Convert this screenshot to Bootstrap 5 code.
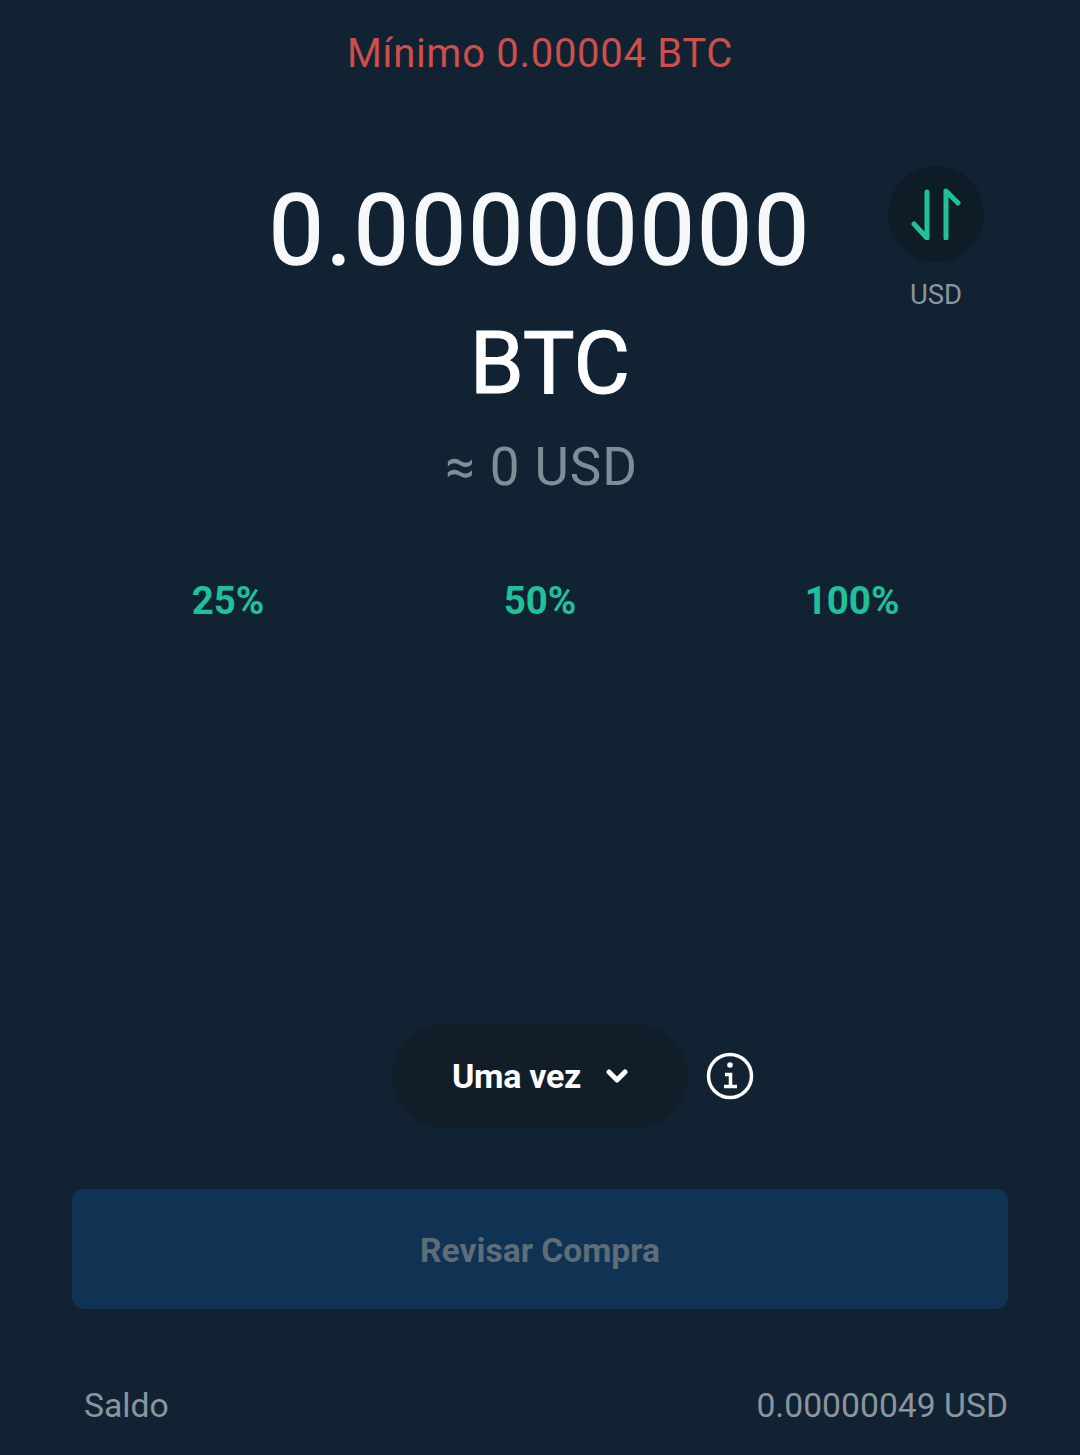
<!DOCTYPE html>
<html lang="pt">
<head>
  <meta charset="UTF-8" />
  <meta name="viewport" content="width=device-width, initial-scale=1" />
  <title>Comprar</title>
  <link href="https://cdn.jsdelivr.net/npm/bootstrap@5.3.3/dist/css/bootstrap.min.css" rel="stylesheet" />
  <style>
    html, body { height: 100%; }
    body { background: #112332; font-family: Roboto, "Liberation Sans", sans-serif; color: #fff; }
    .screen { width: 1080px; height: 1455px; overflow: hidden; }
    .min-msg { color: #cd4e4b; font-size: 40px; line-height: 48px; padding-top: 30px; height: 78px; letter-spacing: .7px; }
    .amount-area { height: 420px; padding-top: 97px; }
    .amount-val { font-size: 98px; line-height: 112px; font-weight: 400; color: #f7f8fa; letter-spacing: 2.1px; -webkit-text-stroke: 1.4px #f7f8fa; }
    .amount-unit { font-size: 87px; line-height: 100px; font-weight: 400; padding-left: 20px; margin-top: 26px; -webkit-text-stroke: 1px #fff; }
    .approx { color: #808c96; font-size: 53px; line-height: 60px; margin-top: 24px; padding-left: 3px; letter-spacing: .9px; }
    .swap-box { top: 166px; left: 888px; width: 96px; }
    .swap-btn { width: 96px; height: 96px; background: #0e1c27; }
    .swap-lbl { color: #8a959e; font-size: 27.5px; line-height: 30px; margin-top: 18px; }
    .pct-row { padding: 0 72px; margin-top: 81px; }
    .pct-item { width: 312px; color: #1fc09a; font-size: 38.5px; line-height: 44px; font-weight: 700; }
    .freq-row { margin-top: 401px; padding-left: 392px; gap: 18px; }
    .freq-pill { width: 296px; height: 104px; background: #111e2a; color: #fff; font-size: 34px; font-weight: 700; gap: 25px; letter-spacing: -.3px; }
    .review-btn { margin: 61px 72px 0; height: 120px; width: 936px; padding-top: 6px; background: #103253; color: #5e6d78; font-size: 33.6px; font-weight: 700; border-radius: 12px; border: 0; }
    .saldo-row { padding: 0 72px 0 84px; margin-top: 77px; color: #8a959e; font-size: 33.7px; line-height: 40px; }
  </style>
</head>
<body>
  <div class="screen position-relative">
    <div class="min-msg text-center">Mínimo 0.00004 BTC</div>

    <div class="amount-area text-center">
      <div class="amount-val">0.00000000</div>
      <div class="amount-unit">BTC</div>
      <div class="approx">≈ 0 USD</div>
    </div>

    <div class="swap-box position-absolute text-center">
      <div class="swap-btn rounded-circle d-flex align-items-center justify-content-center">
        <svg width="52" height="52" viewBox="0 0 52 52" fill="none" stroke="#1fc09a" stroke-width="5" stroke-linecap="round" stroke-linejoin="round">
          <path d="M17 4v46L4 36" />
          <path d="M36 50V3l12 12" />
        </svg>
      </div>
      <div class="swap-lbl">USD</div>
    </div>

    <div class="pct-row d-flex text-center">
      <div class="pct-item">25%</div>
      <div class="pct-item">50%</div>
      <div class="pct-item">100%</div>
    </div>

    <div class="freq-row d-flex align-items-center">
      <div class="freq-pill rounded-pill d-flex align-items-center justify-content-center">
        <span>Uma vez</span>
        <svg width="22" height="14" viewBox="0 0 22 14" fill="none" stroke="#fff" stroke-width="5" stroke-linecap="round" stroke-linejoin="round">
          <path d="M3 3l8 8 8-8" />
        </svg>
      </div>
      <svg width="48" height="48" viewBox="0 0 48 48" fill="none" stroke="#fff">
        <circle cx="24" cy="24" r="21.5" stroke-width="3.5" />
        <circle cx="24" cy="13" r="2.8" fill="#fff" stroke="none" />
        <path d="M19 22.5h5.5v12M18 34.5h13" stroke-width="3.5" />
      </svg>
    </div>

    <button class="review-btn d-block" type="button" disabled>Revisar Compra</button>

    <div class="saldo-row d-flex justify-content-between">
      <span>Saldo</span>
      <span>0.00000049 USD</span>
    </div>
  </div>
  <script src="https://cdn.jsdelivr.net/npm/bootstrap@5.3.3/dist/js/bootstrap.bundle.min.js"></script>
</body>
</html>
